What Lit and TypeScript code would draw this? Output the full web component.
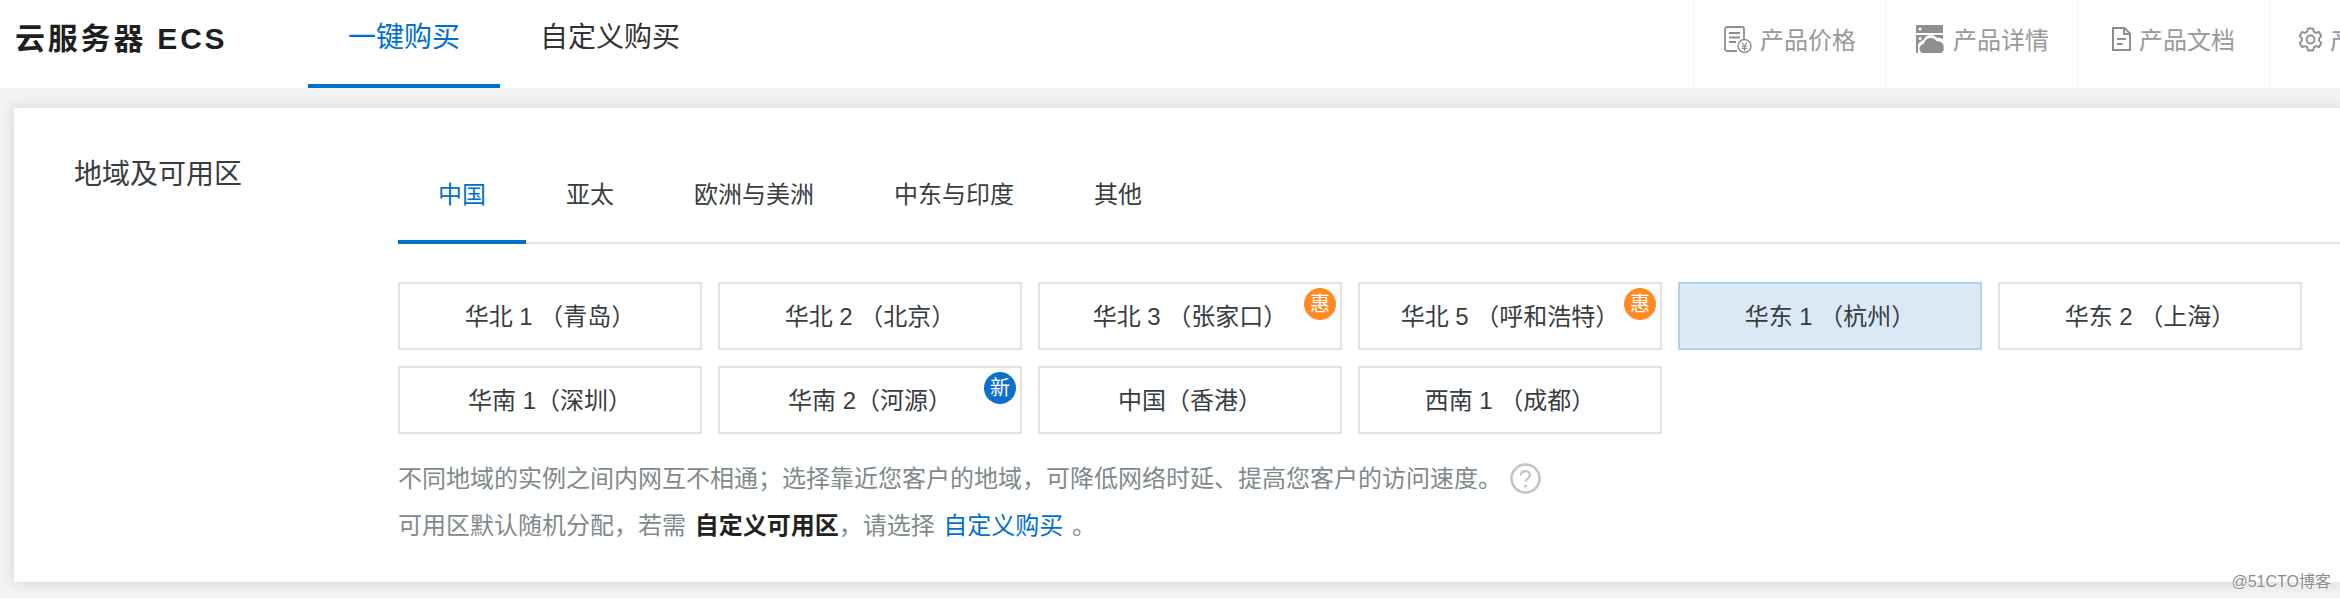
import { LitElement, html, css, nothing } from "lit";
import { customElement } from "lit/decorators.js";

type Region = { text: string; badge?: "hui" | "xin"; selected?: boolean };

const REGIONS: Region[] = [
  { text: "华北 1 （青岛）" },
  { text: "华北 2 （北京）" },
  { text: "华北 3 （张家口）", badge: "hui" },
  { text: "华北 5 （呼和浩特）", badge: "hui" },
  { text: "华东 1 （杭州）", selected: true },
  { text: "华东 2 （上海）" },
  { text: "华南 1（深圳）" },
  { text: "华南 2（河源）", badge: "xin" },
  { text: "中国（香港）" },
  { text: "西南 1 （成都）" },
];

const ICON_PRICE = html`<svg class="icon" width="28" height="27" viewBox="0 0 28 27" fill="none" stroke="#8f8f8f" stroke-width="1.8">
  <path d="M13 25H3a2 2 0 0 1-2-2V3a2 2 0 0 1 2-2h15a2 2 0 0 1 2 2v11" />
  <path d="M5 7h11M5 11.500h11M5 16h7" />
  <circle cx="20.500" cy="20" r="6.500" stroke-width="1.400" />
  <path d="M18 16.500l2.500 3.500 2.500-3.500M17.800 20.200h5.400M17.800 22.400h5.400M20.500 20v5" stroke-width="1.100" />
</svg>`;

const ICON_DETAIL = html`<svg class="icon" width="28" height="28" viewBox="0 0 28 28" fill="#8f8f8f">
  <path d="M0 0h27v8H0z" />
  <path d="M0 10h27v4.500c-1.800-1.300-4-2-6-1.600-1.500-1.800-3.800-2.900-6.200-2.900-3.500 0-6.400 2.200-7.400 5.300C5 15.800 2.800 17.600 2 20v8H0z" />
  <circle cx="4" cy="4" r="1.500" fill="#fff" />
  <circle cx="4" cy="13.500" r="1.500" fill="#fff" />
  <path d="M7 28c-2.500 0-3.500-2.200-3.500-4.200 0-2.500 1.800-4.600 4.300-4.800.5-3.500 3.600-6 7-6 2.500 0 4.700 1.300 5.900 3.300 3.500-.7 7 1.800 7 5.700V24c0 2.300-1.500 4-3.700 4z" />
</svg>`;

const ICON_DOC = html`<svg class="icon" width="19" height="24" viewBox="0 0 19 24" fill="none" stroke="#8f8f8f" stroke-width="2">
  <path d="M1 1h11.500L18 6.500V23H1z" />
  <path d="M12 1v6h6" />
  <path d="M5 12h9M5 17h5.500" />
</svg>`;

const ICON_GEAR = html`<svg class="icon" width="23" height="25" viewBox="0 0 23 25" fill="none" stroke="#8f8f8f" stroke-width="1.900" stroke-linejoin="round">
  <path d="M9 1.500h5l.8 3.100 2.200 1.300 3.100-.9 2.300 4-2.300 2.300v2.400l2.300 2.300-2.300 4-3.100-.9-2.200 1.300-.8 3.100H9l-.8-3.100-2.200-1.300-3.100.9-2.300-4 2.300-2.300v-2.400L.6 9l2.300-4 3.100.9 2.200-1.300z" />
  <circle cx="11.500" cy="12.500" r="4" />
</svg>`;

const ICON_HELP = html`<svg class="help" width="31" height="31" viewBox="0 0 31 31" fill="none" stroke="#c4c4c4">
  <circle cx="15.500" cy="15.500" r="14" stroke-width="2.600" />
  <path d="M11 12.500c0-2.700 2-4.300 4.500-4.300s4.500 1.600 4.500 3.900c0 3.200-4.500 3.300-4.500 6.700" stroke-width="2.200" />
  <circle cx="15.500" cy="23" r="1.500" fill="#c4c4c4" stroke="none" />
</svg>`;

@customElement("app-root")
export class AppRoot extends LitElement {
  static styles = css`
    :host {
      display: block;
      position: relative;
      width: 2340px;
      height: 600px;
      overflow: hidden;
      background: #fff;
      font-family: "Liberation Sans", "Noto Sans CJK SC", sans-serif;
      color: #373d41;
    }
    .header {
      display: flex;
      height: 88px;
      background: #fff;
    }
    .title {
      flex: none;
      width: 293px;
      padding-left: 15px;
      font-size: 30px;
      font-weight: 700;
      line-height: 77px;
      color: #1f1f1f;
      letter-spacing: 2.8px;
      white-space: nowrap;
    }
    .tabs {
      display: flex;
      flex: none;
    }
    .tab {
      padding: 0 40px;
      height: 84px;
      border-bottom: 4px solid transparent;
      font-size: 28px;
      line-height: 76px;
      color: #333;
    }
    .tab.active {
      color: #0070cc;
      border-bottom-color: #0070cc;
    }
    .nav {
      display: flex;
      flex: none;
      width: 647px;
      margin-left: auto;
      overflow: hidden;
    }
    .nav-item {
      display: flex;
      flex: none;
      align-items: center;
      box-sizing: border-box;
      width: 192px;
      height: 88px;
      gap: 8px;
      padding-bottom: 12px;
      border-left: 1px solid #f4f4f4;
      font-size: 24px;
      color: #999;
      white-space: nowrap;
    }
    .nav-price {
      padding-left: 30px;
    }
    .nav-detail {
      padding-left: 30px;
      gap: 9px;
    }
    .nav-doc {
      padding-left: 34px;
    }
    .nav-gear {
      padding-left: 29px;
      gap: 8px;
    }
    .icon {
      flex: none;
      margin-top: 2px;
    }
    .main {
      box-sizing: border-box;
      height: 510px;
      padding: 20px 0 16px 14px;
      background: #f3f3f3;
    }
    .card {
      display: grid;
      grid-template-columns: 384px 1fr;
      height: 474px;
      background: #fff;
      box-shadow: 0 0 14px rgba(0, 0, 0, 0.14);
    }
    .label {
      padding: 47px 0 0 60px;
      font-size: 28px;
      line-height: 40px;
    }
    .content {
      padding-top: 67px;
    }
    .sub-tabs {
      display: flex;
      border-bottom: 2px solid #e3e3e3;
    }
    .sub-tab {
      margin-bottom: -2px;
      padding: 0 40px 25px;
      border-bottom: 4px solid transparent;
      font-size: 24px;
      line-height: 40px;
    }
    .sub-tab.active {
      color: #0070cc;
      border-bottom-color: #0070cc;
    }
    .regions {
      display: grid;
      grid-template-columns: repeat(6, 304px);
      grid-auto-rows: 68px;
      gap: 16px;
      margin-top: 38px;
    }
    .region {
      position: relative;
      display: flex;
      align-items: center;
      justify-content: center;
      box-sizing: border-box;
      padding-bottom: 4px;
      border: 2px solid #e3e3e3;
      background: #fff;
      font-size: 24px;
      white-space: nowrap;
    }
    .region.selected {
      background: #dbe8f5;
      border-color: #b2d2ec;
    }
    .badge {
      position: absolute;
      top: 4px;
      right: 4px;
      width: 32px;
      height: 32px;
      border-radius: 50%;
      font-size: 20px;
      line-height: 32px;
      text-align: center;
      color: #fff;
    }
    .badge.hui {
      background: #ff8a22;
    }
    .badge.xin {
      background: #0e70c9;
    }
    .hints {
      margin-top: 21px;
      font-size: 24px;
      line-height: 47px;
      color: #7f8a8e;
    }
    .hint {
      display: flex;
      align-items: center;
      height: 47px;
      white-space: pre;
      word-spacing: 2px;
    }
    .help {
      flex: none;
      margin-left: 8px;
    }
    .hint b {
      font-weight: 700;
      color: #222;
    }
    .hint .link {
      color: #0070cc;
    }
    .mark {
      position: absolute;
      top: 571px;
      right: 9px;
      font-size: 16px;
      line-height: 22px;
      color: #8c8c8c;
      text-shadow: 0 0 2px #fff, 0 0 2px #fff;
    }
  `;

  render() {
    return html`
      <div class="header">
        <div class="title">云服务器 ECS</div>
        <div class="tabs">
          <div class="tab active">一键购买</div>
          <div class="tab">自定义购买</div>
        </div>
        <div class="nav">
          <div class="nav-item nav-price">${ICON_PRICE}<span>产品价格</span></div>
          <div class="nav-item nav-detail">${ICON_DETAIL}<span>产品详情</span></div>
          <div class="nav-item nav-doc">${ICON_DOC}<span>产品文档</span></div>
          <div class="nav-item nav-gear">${ICON_GEAR}<span>产品控制台</span></div>
        </div>
      </div>
      <div class="main">
        <div class="card">
          <div class="label">地域及可用区</div>
          <div class="content">
            <div class="sub-tabs">
              <div class="sub-tab active">中国</div>
              <div class="sub-tab">亚太</div>
              <div class="sub-tab">欧洲与美洲</div>
              <div class="sub-tab">中东与印度</div>
              <div class="sub-tab">其他</div>
            </div>
            <div class="regions">
              ${REGIONS.map(
                (r) => html`<div class="region ${r.selected ? "selected" : ""}">
                  ${r.text}
                  ${r.badge
                    ? html`<span class="badge ${r.badge}">${r.badge === "hui" ? "惠" : "新"}</span>`
                    : nothing}
                </div>`
              )}
            </div>
            <div class="hints">
              <div class="hint">不同地域的实例之间内网互不相通；选择靠近您客户的地域，可降低网络时延、提高您客户的访问速度。${ICON_HELP}</div>
              <div class="hint">可用区默认随机分配，若需 <b>自定义可用区</b>，请选择 <span class="link">自定义购买</span> 。</div>
            </div>
          </div>
        </div>
      </div>
      <div class="mark">@51CTO博客</div>
    `;
  }
}
